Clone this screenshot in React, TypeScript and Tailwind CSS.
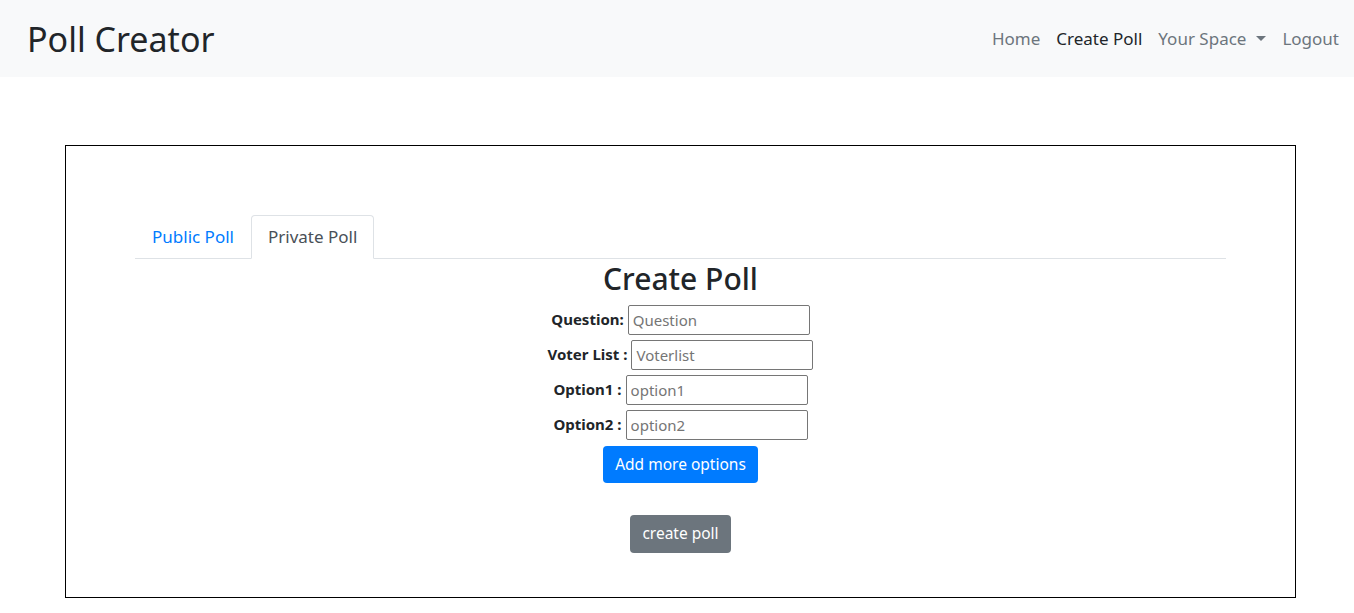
import React from 'react';

const font = { fontFamily: '"Noto Sans", "Open Sans", sans-serif' };

const FormRow = ({ label, placeholder }: { label: string; placeholder: string }) => (
  <div className="flex items-center justify-center h-[35px]">
    <label className="font-bold text-[15px] text-[#212529] mr-[4px]">{label}</label>
    <input
      placeholder={placeholder}
      className="w-[182px] h-[30px] border border-[#767676] rounded-[2px] px-[4px] text-[15px] text-[#212529] placeholder:text-[#757575] outline-none"
    />
  </div>
);

export default function App() {
  return (
    <div className="min-h-[613px] bg-white text-[#212529]" style={font}>
      <nav className="h-[77px] bg-[#f8f9fa] flex items-center justify-between pl-[27px] pr-[15px]">
        <span className="text-[34px] text-[#212529] leading-none">Poll Creator</span>
        <ul className="flex items-center gap-[16px] text-[17px]">
          <li className="text-[#6c757d]">Home</li>
          <li className="text-[#212529]">Create Poll</li>
          <li className="text-[#6c757d] flex items-center">
            Your Space
            <span className="ml-[10px] w-0 h-0 border-l-[5px] border-r-[5px] border-t-[5px] border-l-transparent border-r-transparent border-t-[#6c757d]" />
          </li>
          <li className="text-[#6c757d]">Logout</li>
        </ul>
      </nav>

      <div className="mt-[68px] ml-[65px] w-[1231px] h-[453px] border border-black pt-[69px] px-[69px]">
        <div className="flex h-[44px] border-b border-[#dee2e6]">
          <div className="px-[16px] flex items-center text-[17px] text-[#007bff] border border-transparent">Public Poll</div>
          <div className="px-[16px] flex items-center text-[17px] text-[#495057] bg-white border border-[#dee2e6] border-b-white rounded-t-[4px] -mb-px">Private Poll</div>
        </div>
        <div className="flex flex-col items-center">
          <h2 className="text-[30px] leading-[38px] font-medium mt-[1px] mb-[4px]">Create Poll</h2>
          <FormRow label="Question:" placeholder="Question" />
          <FormRow label="Voter List :" placeholder="Voterlist" />
          <FormRow label="Option1 :" placeholder="option1" />
          <FormRow label="Option2 :" placeholder="option2" />
          <button className="mt-[4px] h-[37px] px-[12px] rounded-[4px] bg-[#007bff] text-white text-[15.5px]">Add more options</button>
          <button className="mt-[32px] h-[38px] px-[12px] rounded-[4px] bg-[#6c757d] text-white text-[15.5px]">create poll</button>
        </div>
      </div>
    </div>
  );
}
